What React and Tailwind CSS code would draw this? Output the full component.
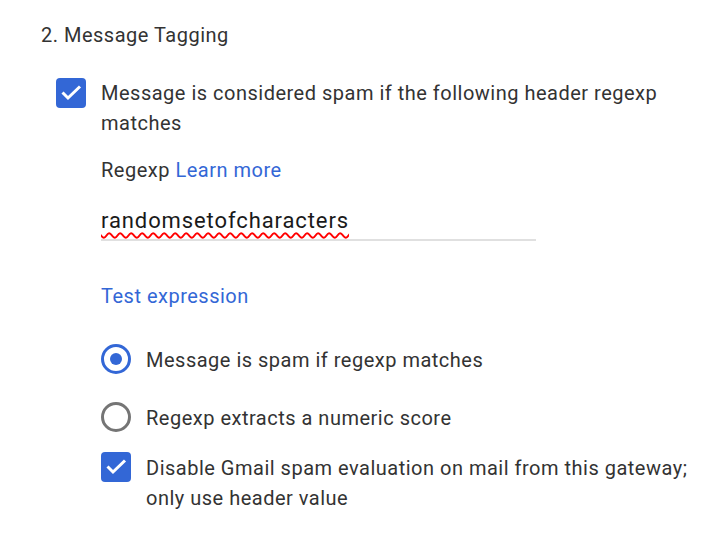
import React from 'react';

const Checkbox = () => (
  <div className="w-[30px] h-[30px] shrink-0 rounded-[4px] bg-[#3367d6] flex items-center justify-center">
    <svg width="30" height="30" viewBox="0 0 30 30">
      <path d="M6.5 14.5 L12 20 L24 8.5" fill="none" stroke="#fff" strokeWidth="3" />
    </svg>
  </div>
);

const Radio = ({ checked }) => (
  <div
    className={`w-[30px] h-[30px] shrink-0 rounded-full border-[3px] flex items-center justify-center ${
      checked ? 'border-[#3367d6]' : 'border-[#757575]'
    }`}
  >
    {checked && <div className="w-[12px] h-[12px] rounded-full bg-[#3367d6]" />}
  </div>
);

const App = () => {
  return (
    <div className="min-h-screen bg-white pl-[41px] pr-[19px] pt-[20px] font-['Roboto',sans-serif] text-[20px] leading-[30px] tracking-[0.5px] text-[#333]">
      <h2>2. Message Tagging</h2>

      <div className="mt-[28px] ml-[15px] flex gap-[15px]">
        <Checkbox />
        <div className="flex-1">
          <p>Message is considered spam if the following header regexp matches</p>

          <p className="mt-[17px]">
            Regexp <a className="text-[#3367d6]">Learn more</a>
          </p>

          <div className="mt-[21px] w-[435px] pb-[3px] border-b-2 border-[#e0e0e0] text-[22px] tracking-[0.9px] text-[#1a1a1a]">
            <span className="underline decoration-wavy decoration-[#f00] decoration-[1.5px] underline-offset-[4px]">
              randomsetofcharacters
            </span>
          </div>

          <p className="mt-[40px] text-[#3367d6]">Test expression</p>

          <div className="mt-[34px] flex gap-[15px]">
            <div className="-mt-[1px]">
              <Radio checked />
            </div>
            <span>Message is spam if regexp matches</span>
          </div>

          <div className="mt-[28px] flex gap-[15px]">
            <div className="-mt-[1px]">
              <Radio />
            </div>
            <span>Regexp extracts a numeric score</span>
          </div>

          <div className="mt-[20px] flex gap-[15px]">
            <div className="-mt-[1px]">
              <Checkbox />
            </div>
            <span>Disable Gmail spam evaluation on mail from this gateway; only use header value</span>
          </div>
        </div>
      </div>
    </div>
  );
};

export default App;
